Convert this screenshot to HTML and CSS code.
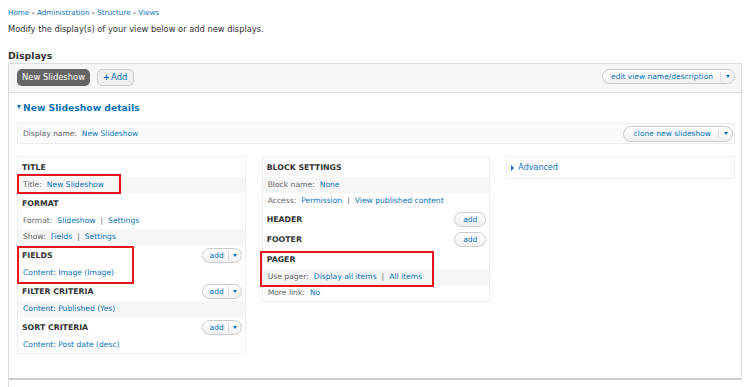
FILE: index.html
```html
<!DOCTYPE html>
<html>
<head>
<meta charset="utf-8">
<link rel="stylesheet" href="styles.css">
</head>
<body>
<div class="page">
  <div class="breadcrumb"><a href="#">Home</a><span class="sep">»</span><a href="#">Administration</a><span class="sep">»</span><a href="#">Structure</a><span class="sep">»</span><a href="#">Views</a></div>
  <p class="help">Modify the display(s) of your view below or add new displays.</p>
  <h2 class="displays-title">Displays</h2>
  <div class="displays">
    <div class="tabs-bar">
      <div class="tabs">
        <span class="tab active">New Slideshow</span>
        <span class="tab add"><b class="plus">+</b>Add</span>
      </div>
      <span class="pill">edit view name/description<span class="caret-wrap"><span class="caret"></span></span></span>
    </div>
    <div class="display-body">
      <div class="details-title"><span class="tri-down"></span>New Slideshow details</div>
      <div class="display-name">
        <div><span class="label">Display name:</span><a href="#">New Slideshow</a></div>
        <span class="pill">clone new slideshow<span class="caret-wrap"><span class="caret"></span></span></span>
      </div>
      <div class="columns">
        <div class="col">
          <div class="section">
            <div class="section-head">TITLE</div>
            <div class="row alt"><span class="label">Title:</span><a href="#">New Slideshow</a></div>
            <span class="annot annot-title"></span>
          </div>
          <div class="section">
            <div class="section-head">FORMAT</div>
            <div class="row"><span class="label">Format:</span><a href="#">Slideshow</a><span class="bar">|</span><a href="#">Settings</a></div>
            <div class="row alt"><span class="label">Show:</span><a href="#">Fields</a><span class="bar">|</span><a href="#">Settings</a></div>
          </div>
          <div class="section">
            <div class="section-head">FIELDS<span class="pill small">add<span class="caret-wrap"><span class="caret"></span></span></span></div>
            <div class="row"><a href="#">Content: Image (Image)</a></div>
            <span class="annot annot-fields"></span>
          </div>
          <div class="section">
            <div class="section-head">FILTER CRITERIA<span class="pill small">add<span class="caret-wrap"><span class="caret"></span></span></span></div>
            <div class="row alt"><a href="#">Content: Published (Yes)</a></div>
          </div>
          <div class="section">
            <div class="section-head">SORT CRITERIA<span class="pill small">add<span class="caret-wrap"><span class="caret"></span></span></span></div>
            <div class="row"><a href="#">Content: Post date (desc)</a></div>
          </div>
        </div>
        <div class="col">
          <div class="section">
            <div class="section-head">BLOCK SETTINGS</div>
            <div class="row alt"><span class="label">Block name:</span><a href="#">None</a></div>
            <div class="row"><span class="label">Access:</span><a href="#">Permission</a><span class="bar">|</span><a href="#">View published content</a></div>
          </div>
          <div class="section">
            <div class="section-head">HEADER<span class="pill small plain">add</span></div>
          </div>
          <div class="section">
            <div class="section-head">FOOTER<span class="pill small plain">add</span></div>
          </div>
          <div class="section">
            <div class="section-head">PAGER</div>
            <div class="row alt"><span class="label">Use pager:</span><a href="#">Display all items</a><span class="bar">|</span><a href="#">All items</a></div>
            <div class="row"><span class="label">More link:</span><a href="#">No</a></div>
            <span class="annot annot-pager"></span>
          </div>
        </div>
        <div class="col">
          <div class="advanced"><span class="tri-right"></span><a href="#">Advanced</a></div>
        </div>
      </div>
    </div>
  </div>
  <div class="below"></div>
</div>
</body>
</html>
```
FILE: styles.css
```css
* { box-sizing: border-box; }
html, body { margin: 0; background: #fff; }
body {
  font-family: "DejaVu Sans", Verdana, sans-serif;
  color: #333;
}
a { color: #0a74b8; text-decoration: none; }
.page { padding: 0 8px; }

.breadcrumb { padding-top: 8px; font-size: 7.2px; line-height: 10px; }
.breadcrumb .sep { color: #444; font-size: 6px; margin: 0 2px; }

.help { margin: 5px 0 0; font-size: 8.3px; line-height: 12px; color: #333; }

.displays-title {
  margin: 14px 0 0;
  font-size: 9.4px;
  line-height: 14px;
  font-weight: bold;
  color: #333;
}

.displays {
  border: 1px solid #ddd;
  border-bottom: 2px solid #ccc;
}

.tabs-bar {
  display: flex;
  justify-content: space-between;
  align-items: flex-start;
  height: 29px;
  padding: 5px 6px 0 8px;
  background: #f6f6f6;
  border-bottom: 1px solid #ddd;
}
.tabs { display: flex; gap: 7px; }
.tab {
  height: 17px;
  line-height: 17px;
  padding: 0 5px;
  border-radius: 5px;
  font-size: 8.4px;
}
.tab.active { background: #666; color: #fff; }
.tab.add {
  border: 1px solid #ccc;
  background: #efefef;
  color: #0a74b8;
  line-height: 15px;
  padding: 0 6px 0 5px;
}
.tab.add .plus { color: #0b5fa5; margin-right: 1px; }

.pill {
  display: inline-flex;
  align-items: center;
  height: 15px;
  padding-left: 8px;
  border: 1px solid #ccc;
  border-radius: 8px;
  background: linear-gradient(#fff, #efefef);
  font-size: 7.5px;
  font-weight: normal;
  color: #0a74b8;
}
.caret-wrap {
  display: flex;
  align-items: center;
  height: 9px;
  margin-left: 7px;
  padding: 0 4px 0 5px;
  border-left: 1px solid #ddd;
}
.caret {
  width: 0;
  height: 0;
  border-left: 2.5px solid transparent;
  border-right: 2.5px solid transparent;
  border-top: 3px solid #0a74b8;
}
.pill.small { padding-left: 7px; }
.pill.small .caret-wrap { margin-left: 4px; padding: 0 4px; }
.pill.plain { padding: 0 8px; }

.display-body { padding: 7px 6px 24px 8px; }

.details-title {
  display: flex;
  align-items: center;
  height: 14px;
  font-size: 9.2px;
  font-weight: bold;
  color: #0a74b8;
}
.tri-down {
  width: 0;
  height: 0;
  border-left: 2.5px solid transparent;
  border-right: 2.5px solid transparent;
  border-top: 4px solid #0a74b8;
  margin-right: 2px;
}

.display-name {
  display: flex;
  justify-content: space-between;
  align-items: center;
  height: 21px;
  margin-top: 9px;
  padding: 0 1px 0 5px;
  border: 1px solid #eee;
  background: #fbfbfb;
  font-size: 7.5px;
}
.display-name .pill { height: 16px; padding-left: 10px; }

.label { color: #666; margin-right: 5px; }
.bar { color: #666; margin: 0 5px; }

.columns {
  display: grid;
  grid-template-columns: repeat(3, 1fr);
  gap: 16px;
  margin-top: 12px;
  align-items: start;
}
.col { border: 1px solid #eee; background: #fff; }

.section { position: relative; }
.section-head {
  display: flex;
  justify-content: space-between;
  align-items: center;
  height: 20px;
  padding: 0 3px 0 4px;
  font-size: 7.8px;
  font-weight: bold;
  color: #333;
}
.row {
  height: 16px;
  line-height: 16px;
  padding-left: 5px;
  font-size: 7.6px;
  color: #666;
  white-space: nowrap;
}
.row.alt { background: #f6f6f6; }

.annot {
  position: absolute;
  border: 2px solid #e8141c;
  pointer-events: none;
}
.annot-title { left: -1px; top: 17px; width: 104px; height: 20px; }
.annot-fields { left: -1px; top: 1px; width: 117px; height: 38px; }
.annot-pager { left: -3px; top: 2px; width: 174px; height: 36px; }

.advanced {
  display: flex;
  align-items: center;
  height: 21px;
  padding-left: 4px;
  font-size: 8px;
}
.tri-right {
  width: 0;
  height: 0;
  border-top: 3px solid transparent;
  border-bottom: 3px solid transparent;
  border-left: 3.5px solid #0a74b8;
  margin-right: 4px;
}

.below { height: 10px; border-left: 1px solid #ddd; }
```
